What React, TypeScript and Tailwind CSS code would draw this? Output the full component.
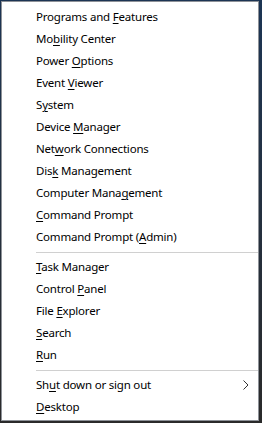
import type { ReactNode } from "react";

type Item = { pre: string; key: string; post: string; submenu?: boolean };

const groups: Item[][] = [
  [
    { pre: "Programs and ", key: "F", post: "eatures" },
    { pre: "Mo", key: "b", post: "ility Center" },
    { pre: "Power ", key: "O", post: "ptions" },
    { pre: "Event ", key: "V", post: "iewer" },
    { pre: "S", key: "y", post: "stem" },
    { pre: "Device ", key: "M", post: "anager" },
    { pre: "Net", key: "w", post: "ork Connections" },
    { pre: "Dis", key: "k", post: " Management" },
    { pre: "Computer Mana", key: "g", post: "ement" },
    { pre: "", key: "C", post: "ommand Prompt" },
    { pre: "Command Prompt (", key: "A", post: "dmin)" },
  ],
  [
    { pre: "", key: "T", post: "ask Manager" },
    { pre: "Control ", key: "P", post: "anel" },
    { pre: "File ", key: "E", post: "xplorer" },
    { pre: "", key: "S", post: "earch" },
    { pre: "", key: "R", post: "un" },
  ],
  [
    { pre: "Sh", key: "u", post: "t down or sign out", submenu: true },
    { pre: "", key: "D", post: "esktop" },
  ],
];

function Row({ item }: { item: Item }): ReactNode {
  return (
    <div className="relative flex h-[22px] items-center pl-[34px]">
      <span className="whitespace-pre tracking-[-0.2px]">
        {item.pre}
        <span className="underline underline-offset-2">{item.key}</span>
        {item.post}
      </span>
      {item.submenu && (
        <svg className="absolute right-[9px] top-[6px]" width="6" height="10" viewBox="0 0 6 10">
          <path d="M0.5 0.5 L5 5 L0.5 9.5" fill="none" stroke="#333" strokeWidth="1" />
        </svg>
      )}
    </div>
  );
}

export default function App() {
  return (
    <div className="h-[423px] w-[262px] bg-gradient-to-b from-[#1c3554] to-[#2a2a2a] pb-[2px] pl-px pr-[3px] pt-px">
      <div
        className="h-full border border-[#8e9298] bg-white pt-[4px] text-[11.5px] leading-none text-black"
        style={{ fontFamily: '"Segoe UI", "Noto Sans", "Liberation Sans", sans-serif' }}
      >
        {groups.map((g, i) => (
          <div key={i}>
            {i > 0 && (
              <div className="flex h-[8px] items-center pl-[34px]">
                <div className="h-px w-full bg-[#d0d0d0]" />
              </div>
            )}
            {g.map((it) => (
              <Row key={it.pre + it.key + it.post} item={it} />
            ))}
          </div>
        ))}
      </div>
    </div>
  );
}
